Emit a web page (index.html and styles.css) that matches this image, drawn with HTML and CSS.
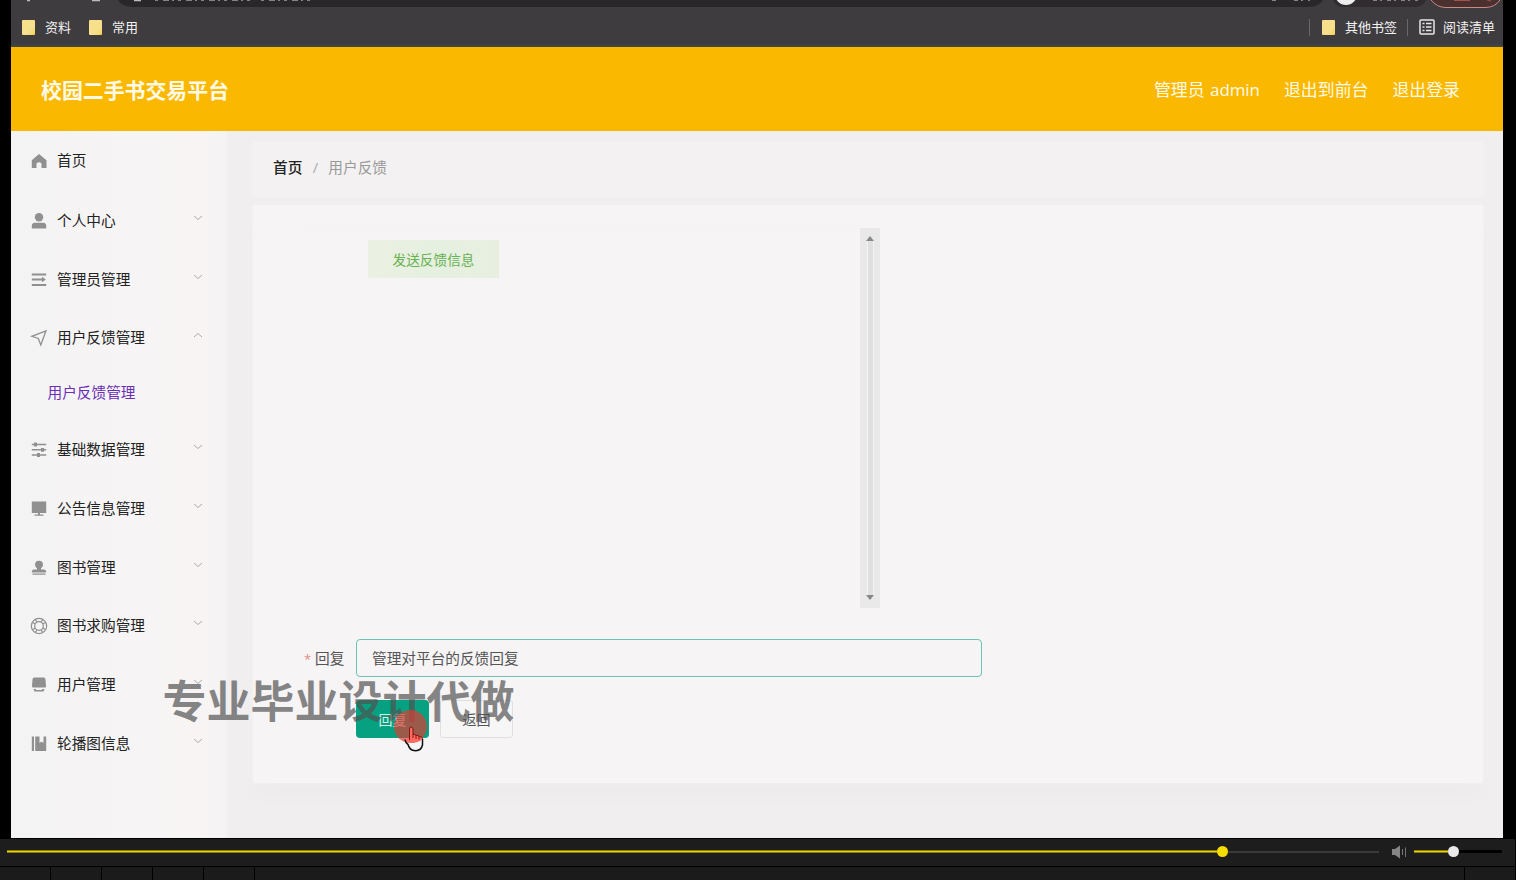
FILE: index.html
```html
<!DOCTYPE html>
<html lang="zh-CN">
<head>
<meta charset="utf-8">
<title>校园二手书交易平台</title>
<link rel="stylesheet" href="styles.css">
</head>
<body>
<div class="player">
  <div class="screen">
    <div class="browser">
      <svg class="toolbar" width="1492" height="10" viewBox="0 0 1492 10">
        <path d="M107 0Q111 7 122 7H1298Q1308 7 1312 0Z" fill="#29272a"/>
        <path d="M1322 0Q1324 7 1332 7H1404Q1412 7 1415 0Z" fill="#302c2f"/>
        <circle cx="1335" cy="-6" r="11" fill="#eee"/>
        <path d="M1420 0Q1426 7.500 1435 7.500H1474Q1484 7.500 1489 0" fill="#4a302f" stroke="#c98b86"/>
        <path d="M16 .5h3M81 .5h8M123 .5h7" stroke="#bbb" stroke-width="1.500"/>
        <path d="M144 .5h96M250 .5h50" stroke="#858386" stroke-dasharray="3 5 6 3 2 4"/>
        <path d="M1261 .5h6M1283 .5h16M1362 .5h45" stroke="#858386" stroke-dasharray="4 3 2 5"/>
        <path d="M1443 .5h16M1476 0l4 1" stroke="#a5534a"/>
      </svg>
      <div class="bookmarks">
        <span class="folder"></span><span class="bm first">资料</span>
        <span class="folder"></span><span class="bm">常用</span>
        <span class="spring"></span>
        <i class="rule"></i><span class="folder"></span><span class="bm">其他书签</span>
        <i class="rule two"></i>
        <svg class="list" width="16" height="16" viewBox="0 0 16 16" fill="none" stroke="#e8e8e8"><rect x="1" y="1" width="14" height="14" rx="1" stroke-width="1.500"/><path d="M3.500 4.500h2M7 4.500h5.500M3.500 8h2M7 8h5.500M3.500 11.500h2M7 11.500h5.500" stroke-width="1.400"/></svg>
        <span class="bm">阅读清单</span>
      </div>
    </div>
    <header class="header">
      <h1 class="brand">校园二手书交易平台</h1>
      <nav class="account"><span>管理员 admin</span><span>退出到前台</span><span>退出登录</span></nav>
    </header>
    <div class="body">
      <aside class="side">
        <div class="item home"><svg class="ico" viewBox="0 0 16 16"><path d="M8 1 15.500 7.200V15H10.500V10.500Q8 8 5.500 10.500V15H.8V7.200Z" fill="#909090"/></svg><span>首页</span></div>
        <div class="item"><svg class="ico" viewBox="0 0 16 16" fill="#909090"><circle cx="8" cy="4.300" r="4.200"/><path d="M.8 15.500V13Q.8 9.800 4 9.800H12Q15.200 9.800 15.200 13V15.500Z"/></svg><span>个人中心</span><svg class="arr" viewBox="0 0 10 6"><path d="M1 1 5 4.500 9 1"/></svg></div>
        <div class="item"><svg class="ico" viewBox="0 0 16 16" stroke="#909090" stroke-width="2"><path d="M.8 2.500H15.200M.8 7.500H11M.8 13H15.200"/><path d="M11 4.800 14.800 7.500 11 10.200Z" fill="#909090" stroke="none"/></svg><span>管理员管理</span><svg class="arr" viewBox="0 0 10 6"><path d="M1 1 5 4.500 9 1"/></svg></div>
        <div class="item open"><svg class="ico" viewBox="0 0 16 16" fill="none" stroke="#909090" stroke-width="1.300"><path d="M15 .8 .8 6.300 7.300 8.500 9.800 15Z"/></svg><span>用户反馈管理</span><svg class="arr" viewBox="0 0 10 6"><path d="M1 5 5 1.500 9 5"/></svg></div>
        <div class="sub">用户反馈管理</div>
        <div class="item"><svg class="ico" viewBox="0 0 16 16" stroke="#909090" stroke-width="1.500"><path d="M.8 2.500H15.200M.8 7.800H15.200M.8 13H15.200"/><path d="M3 2.500H6M10 7.800H13M6 13H9" stroke-width="3.800"/></svg><span>基础数据管理</span><svg class="arr" viewBox="0 0 10 6"><path d="M1 1 5 4.500 9 1"/></svg></div>
        <div class="item"><svg class="ico" viewBox="0 0 16 16" fill="#909090"><path d="M.8 .5H15.200V12H.8ZM7 12H9V13.600H12.500V14.800H3.500V13.600H7Z"/></svg><span>公告信息管理</span><svg class="arr" viewBox="0 0 10 6"><path d="M1 1 5 4.500 9 1"/></svg></div>
        <div class="item"><svg class="ico" viewBox="0 0 16 16" fill="#909090"><path d="M8 .8A4 4 0 0 1 12 4.800Q12 7 10 8.200V9.500H13Q15.200 9.500 15.200 12.500H.8Q.8 9.500 3 9.500H6V8.200Q4 7 4 4.800A4 4 0 0 1 8 .8ZM1.500 13.400H14.500V14.800H1.500Z"/></svg><span>图书管理</span><svg class="arr" viewBox="0 0 10 6"><path d="M1 1 5 4.500 9 1"/></svg></div>
        <div class="item"><svg class="ico" viewBox="0 0 16 16" fill="none" stroke="#909090" stroke-width="1.200"><circle cx="8" cy="8" r="7.700"/><circle cx="8" cy="8" r="4.300"/><path d="M4.200 1.400 6 4.200M1.400 4.200 4.200 6M11.800 1.400 10 4.200M14.600 4.200 11.800 6M4.200 14.600 6 11.800M1.400 11.800 4.200 10M11.800 14.600 10 11.800M14.600 11.800 11.800 10"/></svg><span>图书求购管理</span><svg class="arr" viewBox="0 0 10 6"><path d="M1 1 5 4.500 9 1"/></svg></div>
        <div class="item"><svg class="ico" viewBox="0 0 16 16" fill="#909090"><path d="M3 .5H13Q14.200 .5 14.500 2.500L15 9Q15 10.500 14 10.500H2Q1 10.500 1 9L1.500 2.500Q1.800 .5 3 .5ZM2.500 12H5V13H11V12H13.500L12.500 14.500H3.500Z"/></svg><span>用户管理</span><svg class="arr" viewBox="0 0 10 6"><path d="M1 1 5 4.500 9 1"/></svg></div>
        <div class="item"><svg class="ico" viewBox="0 0 16 16" fill="#909090"><path d="M.8 .5H3V15H.8ZM4.200 .5H8.500V7L10.500 5.500 12.500 7V.5H15.200V15H4.200Z"/></svg><span>轮播图信息</span><svg class="arr" viewBox="0 0 10 6"><path d="M1 1 5 4.500 9 1"/></svg></div>
      </aside>
      <main class="main">
        <div class="crumbs"><b>首页</b><i>/</i><span>用户反馈</span></div>
        <section class="card">
          <div class="scroller">
            <div class="pane"><button class="send">发送反馈信息</button></div>
            <div class="track"><i class="up"></i><i class="groove"></i><i class="down"></i></div>
          </div>
          <div class="field"><label><em>*</em> 回复</label><div class="input">管理对平台的反馈回复</div></div>
          <div class="actions"><button class="btn primary">回复</button><button class="btn">返回</button></div>
        </section>
      </main>
    </div>
    <div class="watermark">专业毕业设计代做</div>
    <svg class="pointer" width="40" height="46" viewBox="0 0 40 46">
      <path d="M17 32V20Q17 18.500 18.200 18.500T19.500 20V25.500H22V26.500H25V27.500H28Q29.500 28 29.500 30V34Q29.500 37 27.500 41H18.500Q17 37 13 33.500 10.500 30.500 12.500 29.500 15 29.500 17 32Z" fill="#f5f4f5"/>
      <circle cx="17.500" cy="17.500" r="16.500" fill="#e23a30" fill-opacity=".68"/>
      <path d="M17 32V20Q17 18.500 18.200 18.500T19.500 20V25.500H22V26.500H25V27.500H28L29 30 27 32Q22 35 14 33L13 30 15 30Z" fill="#ff6a62"/>
      <path d="M16.500 31V20Q16.500 18 18.200 18T20 20V29M20 25.500Q23 24.500 23 27V30M23 26.500Q26 25.500 26 28V30.500M26 27.500Q29.500 27 29.500 30" fill="none" stroke="#8c1512"/>
      <path d="M12 30.500Q12.500 34 15 35.500 16.500 41 21 41.500 28 42.500 29.500 36V30" fill="none" stroke="#111" stroke-width="1.500"/>
    </svg>
  </div>
  <div class="controls">
    <div class="seek"><i class="played"></i><i class="knob"></i><i class="rest"></i></div>
    <svg class="speaker" width="16" height="14" viewBox="0 0 16 14"><path d="M1 4H4L9 .5V13.500L4 10H1Z" fill="#858585"/><path d="M11.500 4V10M14.500 2.500V12" stroke="#777"/></svg>
    <div class="volume"><i class="played"></i><i class="knob"></i><i class="rest"></i></div>
  </div>
  <div class="keys"><i></i><i></i><i></i><i></i><i></i><i class="wide"></i><i class="last"></i></div>
</div>
</body>
</html>
```
FILE: styles.css
```css
* { box-sizing: border-box; }
body { margin: 0; background: #000; font-family: "Open Sans", "Noto Sans CJK SC", sans-serif; }
i, em { font-style: normal; }
button { font: inherit; padding: 0; }
.player { width: 1516px; height: 880px; overflow: hidden; display: flex; flex-direction: column; background: #000; }
.screen { position: relative; width: 1492px; height: 838px; margin-left: 11px; overflow: hidden; display: flex; flex-direction: column; background: #f0eeef; }

.browser { height: 47px; flex: none; background: linear-gradient(#3e3c3f 42px, #354149 44px, #4c4636 47px); display: flex; flex-direction: column; }
.toolbar { display: block; flex: none; }
.bookmarks { height: 34px; display: flex; align-items: center; padding: 0 9px 0 11px; font-size: 13px; line-height: 20px; color: #f2f2f2; white-space: nowrap; }
.folder { width: 13px; height: 15px; margin-right: 10px; background: linear-gradient(135deg, #f8df8b, #f7e08d 65%, #f2d252); border-radius: 1px; }
.bm { padding-bottom: 1px; }
.bm.first { margin-right: 18px; }
.spring { flex: 1; }
.rule { width: 1px; height: 17px; background: #69676a; margin-right: 12px; }
.rule.two { margin: 0 11px 0 10px; }
.list { margin-right: 8px; }
.list + .bm { margin-right: -1px; }

.header { height: 84px; flex: none; display: flex; align-items: center; justify-content: space-between; padding: 1px 43px 0 30px; background: #fab900; color: #fff9e8; }
.brand { margin: 0; font-size: 20.900px; line-height: 30px; font-weight: 700; }
.account { display: flex; gap: 24px; font-size: 16.900px; line-height: 24px; }
.account span:first-child { word-spacing: 1px; }

.body { flex: 1; display: flex; }
.side { width: 216px; background: linear-gradient(90deg, #f4f3f4, #f6f4f5 50%, #f8f4f4 88%, #f4f3f4); font-size: 14.670px; color: #222; }
.item { height: 58.800px; display: flex; align-items: center; padding: 1.500px 24px 0 20px; line-height: 22px; }
.item.home, .item.open { padding-top: 0; }
.item .ico { width: 16px; height: 16px; margin: 2px 10px 0 0; overflow: visible; }
.item .arr { width: 10px; height: 6px; margin: 0 0 4px auto; fill: none; stroke: #aaa; }
.sub { height: 52.700px; line-height: 52px; padding-left: 36.500px; color: #6b2fb5; }

.main { flex: 1; display: flex; flex-direction: column; padding: 11px 20px 0 26px; background: #f0eeef; }
.crumbs { height: 54px; display: flex; align-items: center; padding: 0 20px 4px; font-size: 14.670px; line-height: 22px; background: #f3f1f2; box-shadow: 0 0 4px #f5f4f5; }
.crumbs b { font-weight: 500; color: #222; }
.crumbs i { width: 26px; text-align: center; color: #aaa; }
.crumbs span { color: #999; }
.card { height: 578px; margin-top: 9px; padding: 23px 0 0 49px; background: #f6f4f5; box-shadow: 0 0 5px #f3f2f3, 0 18px 12px -6px #edebec; }
.scroller { width: 578px; height: 380px; display: flex; margin-bottom: 31px; }
.pane { width: 558px; padding: 11px 0 0 66px; border-top: 1px solid #f4f3f4; }
.send { width: 131px; height: 38px; padding-top: 1px; border: 0; color: #67b150; background: linear-gradient(90deg, #ebf0e2, #e5f0e0 50%, #e8efe1); font-size: 13.670px; line-height: 20px; }
.track { width: 20px; display: flex; flex-direction: column; align-items: center; padding: 8px 0; background: #eae9ea; }
.up { border: 4px solid transparent; border-top: 0; border-bottom: 5px solid #888; }
.down { border: 4px solid transparent; border-bottom: 0; border-top: 5px solid #888; }
.groove { flex: 1; width: 7px; background: #e1e0e1; border: solid #f5f4f5; border-width: 0 1px; }
.field { display: flex; align-items: center; height: 38px; font-size: 14.670px; line-height: 22px; color: #555; }
.field label { width: 42px; margin-right: 12px; padding-left: 2px; white-space: nowrap; }
.field label em { color: #e58b8b; font-size: 13px; }
.input { width: 626px; height: 38px; padding: 7px 15px; border: 1px solid #69c5b0; border-radius: 4px; }
.actions { display: flex; gap: 11px; padding: 23px 0 0 54px; }
.btn { width: 73px; height: 38px; border: 1px solid #e0dfe0; border-radius: 3px; background: #f7f6f7; color: #555; font-size: 14px; }
.btn.primary { border: 0; border-radius: 4px; background: #05a181; color: #d5f3eb; }

.watermark { position: absolute; left: 151.500px; top: 671px; font-size: 44px; line-height: 60px; font-weight: 700; white-space: nowrap; color: rgba(82, 82, 82, .7); }
.pointer { position: absolute; left: 382px; top: 709px; }

.controls { height: 27px; margin-top: 1px; flex: none; display: flex; align-items: center; padding: 0 13px 2px 7px; background: #1d1d1d; width: 1515px; }
.seek { width: 1373px; display: flex; align-items: center; margin-right: 12px; }
.seek .played { width: 1210px; }
.played { height: 3px; background: #efd800; border: solid #8c7b0a; border-width: 1px 0; }
.knob { width: 11px; height: 11px; border-radius: 50%; background: #f5dd00; }
.seek .rest { flex: 1; height: 2px; background: #3a3a3a; }
.speaker { margin-right: 7px; }
.volume { width: 88px; display: flex; align-items: center; }
.volume .played { width: 34px; }
.volume .knob { background: #eaeaea; }
.volume .rest { flex: 1; height: 3px; background: #000; }
.keys { height: 13px; margin-top: 1px; display: flex; gap: 1px; }
.keys i { width: 50px; background: #1b1b1b; }
.keys .wide { width: 1209px; }
.keys .last { width: 50px; }
```
